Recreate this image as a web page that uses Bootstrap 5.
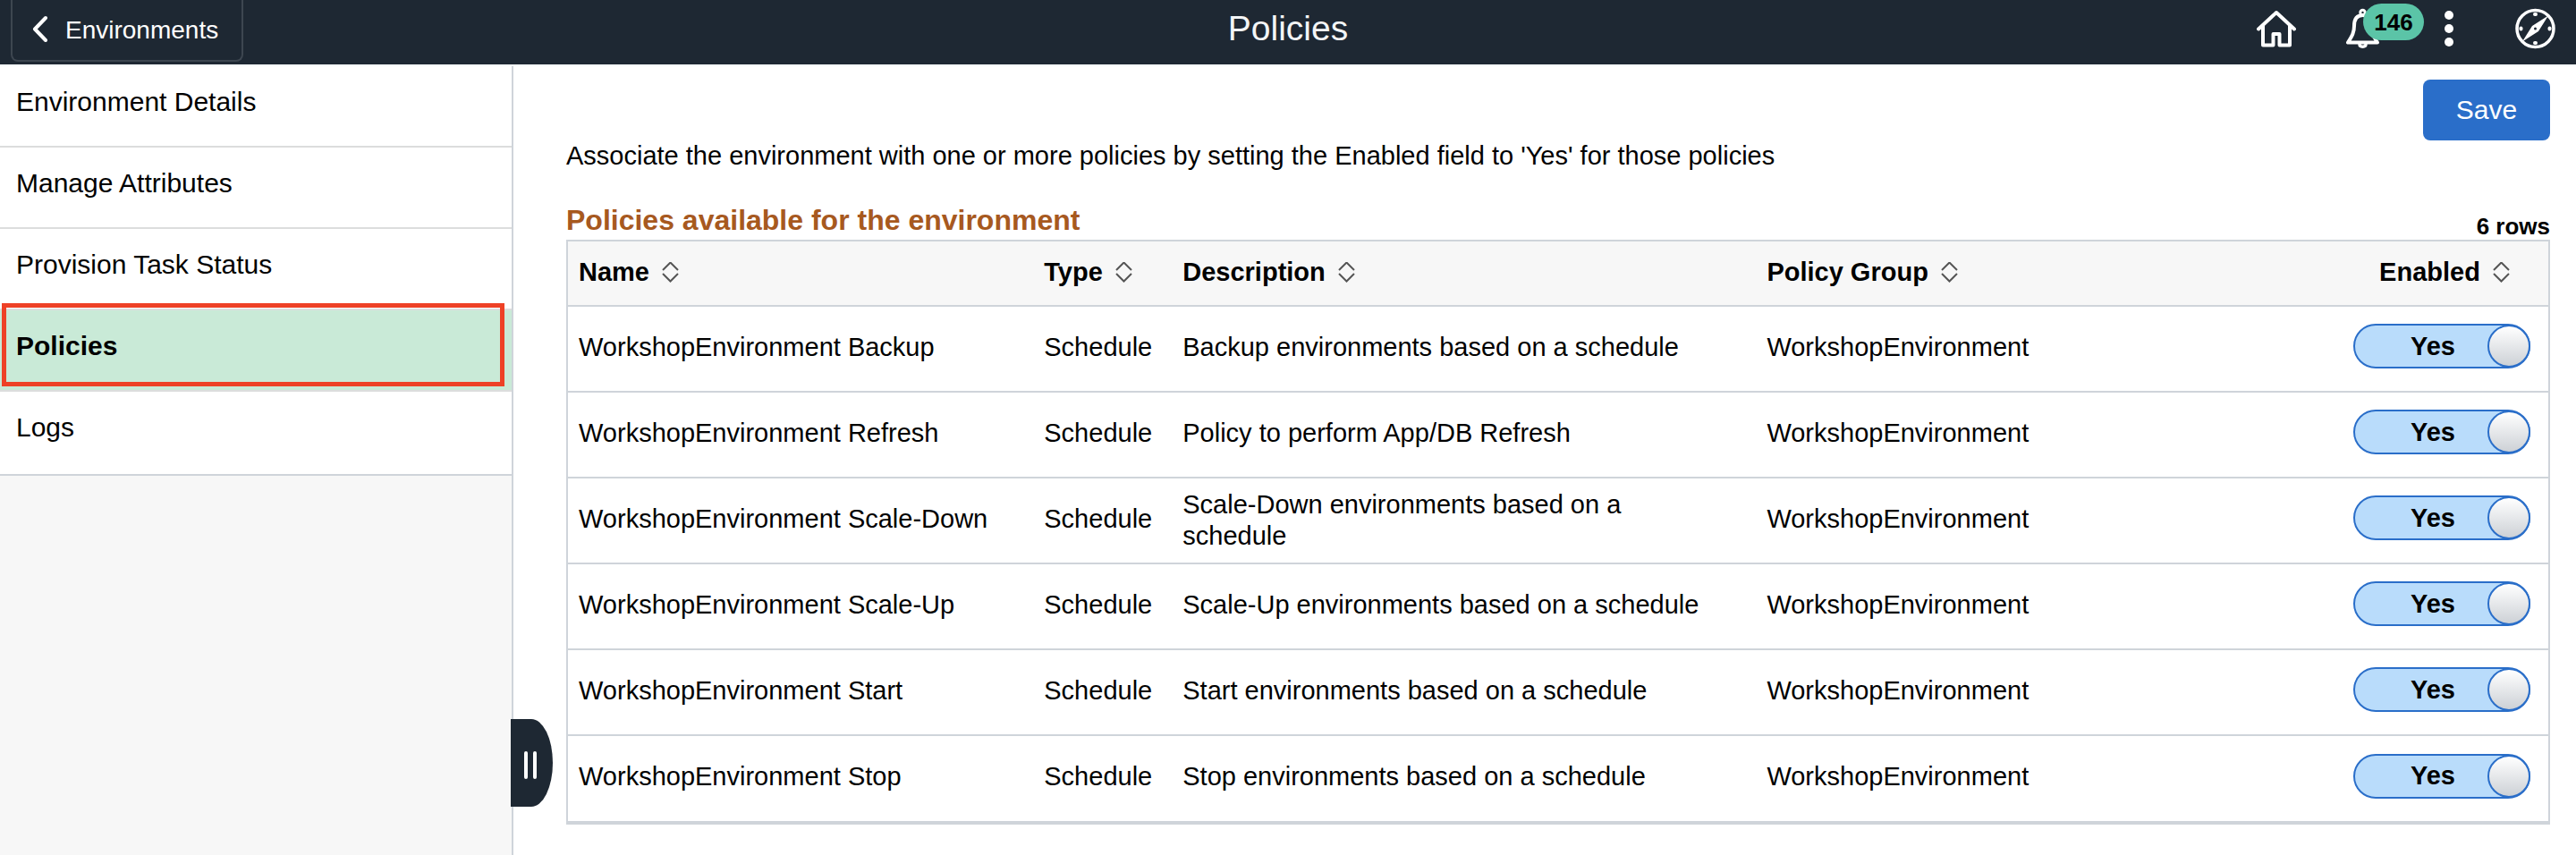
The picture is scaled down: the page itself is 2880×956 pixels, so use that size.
<!DOCTYPE html>
<html lang="en">
<head>
<meta charset="utf-8">
<meta name="viewport" content="width=device-width, initial-scale=1">
<title>Policies</title>
<link href="https://cdn.jsdelivr.net/npm/bootstrap@5.3.0/dist/css/bootstrap.min.css" rel="stylesheet">
<style>
  :root { --ink: #1e2833; --line: #cfd4da; --brand: #2a6ec9; }
  body { font-family: "Liberation Sans", Arial, sans-serif; font-size: 29px; line-height: 35px; color: #000; background: #fff; }

  /* Top bar */
  .topbar { display: grid; grid-template-columns: 1fr auto 1fr; height: 74px; background: var(--ink); border-bottom: 2px solid #f2f5f6; padding: 0 12px; }
  .back-btn { height: 69px; padding: 0 26px 0 22px; gap: 20px; font-size: 28px; line-height: 32px; color: #fff; border: 2px solid #3d4650; border-top: 0; border-radius: 0 0 8px 8px; text-decoration: none; }
  .page-title { font-size: 39px; line-height: 46px; font-weight: 400; color: #f3f5f6; padding-top: 9px; }
  .tool { display: block; padding: 0; border: 0; background: none; color: #fff; line-height: 0; height: 64px; }
  .tool svg { display: block; }
  .tool-home { margin-right: 56px; }
  .tool-bell { margin-right: 73px; }
  .tool-more { margin-right: 69px; }
  .tool-nav { margin-right: 11px; }
  .count { left: 19px; top: 4px; width: 68px; height: 41px; border-radius: 21px; background: #5bc4a7; color: #000; font-size: 26px; line-height: 43px; font-weight: 700; }

  /* Side navigation */
  .sidebar { width: 574px; background: #f7f7f7; border-right: 2px solid var(--line); font-size: 30px; }
  .side-list { background: #fff; border-bottom: 2px solid var(--line); padding-bottom: 3px; }
  .side-list li + li { border-top: 2px solid #dcdddd; }
  .side-link { display: block; padding: 22px 18px 32px; color: #000; text-decoration: none; }
  .side-link.active { background: #c9ead7; font-weight: 700; }
  .callout { top: -8px; right: 8px; bottom: 4px; left: 2px; border: 5px solid #ee4126; pointer-events: none; }
  .side-handle { left: 571px; bottom: 54px; width: 47px; height: 98px; border: 0; border-radius: 0 24px 24px 0 / 0 49px 49px 0; background: var(--ink); gap: 6px; padding: 4px 4px 0 0; }
  .side-handle i { width: 4px; height: 31px; border-radius: 2px; background: #fff; }

  /* Content */
  .content { padding: 15px 29px 20px 59px; }
  .save-btn { width: 142px; height: 68px; padding-bottom: 3px; font-size: 30px; line-height: 35px; color: #fff; background: var(--brand); border: 0; border-radius: 8px; }
  .grid-head { padding-top: 12px; }
  .grid-title { font-size: 32px; line-height: 36px; font-weight: 700; color: #a7591f; }
  .row-count { font-size: 26px; line-height: 30px; font-weight: 700; }
  .policy-grid { table-layout: fixed; border: 2px solid var(--line); border-bottom-width: 4px; border-collapse: separate; border-spacing: 0; }
  .policy-grid th { height: 73px; padding: 0 12px 2px; background: #f7f7f7; border-bottom: 2px solid var(--line); white-space: nowrap; }
  .policy-grid th:last-child { padding-right: 6px; }
  .policy-grid td { height: 96px; padding: 0 60px 4px 12px; border-bottom: 2px solid var(--line); vertical-align: middle; }
  .policy-grid td:first-child { padding-right: 12px; }
  .policy-grid tr:last-child td { height: 95px; border-bottom: 0; }
  .policy-grid .switch-cell { padding: 0 20px 6px; text-align: right; }
  .col-name { width: 23.5%; }
  .col-type { width: 7%; }
  .col-desc { width: 29.5%; }
  .col-switch { width: 238px; }
  .sort-btn { display: inline-flex; align-items: center; gap: 14px; padding: 0; border: 0; background: none; font-weight: 700; color: #000; }
  .switch { display: inline-flex; align-items: center; width: 198px; height: 50px; border: 2px solid var(--brand); border-radius: 25px; background: #b9dcfb; font-weight: 700; vertical-align: middle; cursor: pointer; }
  .switch span { flex: 1; text-align: center; padding-left: 24px; }
  .switch input { appearance: none; width: 48px; height: 48px; margin: -1px -2px; border: 2px solid var(--brand); border-radius: 50%; background: linear-gradient(#fff, #cdd1d6); }
</style>
</head>
<body class="min-vh-100 d-flex flex-column">

<header class="topbar">
  <div class="d-flex align-items-start">
    <a class="back-btn d-flex align-items-center" href="#">
      <svg width="17" height="35" viewBox="0 0 17 35" fill="none" stroke="#fff" stroke-width="4" stroke-linecap="round" stroke-linejoin="round" aria-hidden="true"><path d="M15 4 3 16.500 15 29"/></svg>
      <span>Environments</span>
    </a>
  </div>
  <h1 class="page-title m-0">Policies</h1>
  <div class="d-flex justify-content-end">
    <button class="tool tool-home" type="button" aria-label="Home">
      <svg width="44" height="64" viewBox="0 0 44 64" fill="none" stroke="#fff" stroke-width="4" stroke-linejoin="round" stroke-linecap="round"><path d="M2 32.500 22 14 42 32.500M7 29V50.500H18.500V38H25.500V50.500H37V29"/></svg>
    </button>
    <button class="tool tool-bell position-relative" type="button" aria-label="Notifications">
      <svg width="37" height="64" viewBox="0 0 37 64" fill="none" stroke="#fff" stroke-width="4" stroke-linejoin="round" stroke-linecap="round"><path d="M2 47.500H35C30 40 28.500 36 28.500 29C28.500 21 25 17 18.500 17S9 21 9 29C9 36 7 40 2 47.500Z"/><circle cx="18.500" cy="14" r="2.700" stroke-width="3"/><path d="M15 49.500C15 53 22 53 22 49.500" stroke-width="3.500"/></svg>
      <span class="count position-absolute">146</span>
    </button>
    <button class="tool tool-more" type="button" aria-label="Actions">
      <svg width="10" height="64" viewBox="0 0 10 64" fill="#fff"><circle cx="5" cy="17" r="5"/><circle cx="5" cy="32" r="5"/><circle cx="5" cy="47" r="5"/></svg>
    </button>
    <button class="tool tool-nav" type="button" aria-label="Navigator">
      <svg width="45" height="64" viewBox="0 0 45 64" fill="none" stroke="#fff"><circle cx="22.500" cy="32" r="20.500" stroke-width="3.500"/><path fill="#fff" stroke="none" fill-rule="evenodd" d="M37 17.500 26 35 8 46.500 19 29ZM22.500 30.500A1.500 1.500 0 1 0 22.500 33.500A1.500 1.500 0 1 0 22.500 30.500Z"/><path stroke-width="4" stroke-linecap="round" d="M22 16H23M22 48H23M6.500 31.500V32.500M38.500 31.500V32.500"/></svg>
    </button>
  </div>
</header>

<div class="d-flex flex-grow-1 position-relative">
  <nav class="sidebar flex-shrink-0" aria-label="Environment">
    <ul class="side-list list-unstyled m-0">
      <li><a class="side-link" href="#">Environment Details</a></li>
      <li><a class="side-link" href="#">Manage Attributes</a></li>
      <li><a class="side-link" href="#">Provision Task Status</a></li>
      <li class="position-relative"><a class="side-link active" href="#" aria-current="page">Policies</a><div class="callout position-absolute"></div></li>
      <li><a class="side-link" href="#">Logs</a></li>
    </ul>
  </nav>
  <button class="side-handle position-absolute d-flex align-items-center justify-content-center" type="button" aria-label="Collapse navigation"><i></i><i></i></button>

  <main class="content flex-grow-1">
    <div class="d-flex justify-content-end"><button class="save-btn" type="button">Save</button></div>
    <p class="mb-4">Associate the environment with one or more policies by setting the Enabled field to 'Yes' for those policies</p>
    <div class="grid-head d-flex justify-content-between align-items-end">
      <h2 class="grid-title m-0 pb-1" id="grid-title">Policies available for the environment</h2>
      <div class="row-count">6 rows</div>
    </div>
    <table class="policy-grid w-100" aria-labelledby="grid-title">
      <colgroup><col class="col-name"><col class="col-type"><col class="col-desc"><col><col class="col-switch"></colgroup>
      <thead>
        <tr>
          <th scope="col"><button class="sort-btn" type="button">Name <svg width="19" height="24" viewBox="0 0 19 24" fill="none" stroke="#555" stroke-width="2"><path d="M1 9 9.500 .5 18 9M1 13 9.500 21.500 18 13"/></svg></button></th>
          <th scope="col"><button class="sort-btn" type="button">Type <svg width="19" height="24" viewBox="0 0 19 24" fill="none" stroke="#555" stroke-width="2"><path d="M1 9 9.500 .5 18 9M1 13 9.500 21.500 18 13"/></svg></button></th>
          <th scope="col"><button class="sort-btn" type="button">Description <svg width="19" height="24" viewBox="0 0 19 24" fill="none" stroke="#555" stroke-width="2"><path d="M1 9 9.500 .5 18 9M1 13 9.500 21.500 18 13"/></svg></button></th>
          <th scope="col"><button class="sort-btn" type="button">Policy Group <svg width="19" height="24" viewBox="0 0 19 24" fill="none" stroke="#555" stroke-width="2"><path d="M1 9 9.500 .5 18 9M1 13 9.500 21.500 18 13"/></svg></button></th>
          <th scope="col" class="text-center"><button class="sort-btn" type="button">Enabled <svg width="19" height="24" viewBox="0 0 19 24" fill="none" stroke="#555" stroke-width="2"><path d="M1 9 9.500 .5 18 9M1 13 9.500 21.500 18 13"/></svg></button></th>
        </tr>
      </thead>
      <tbody>
        <tr><td>WorkshopEnvironment Backup</td><td class="pe-0">Schedule</td><td>Backup environments based on a schedule</td><td>WorkshopEnvironment</td><td class="switch-cell"><label class="switch"><span>Yes</span><input type="checkbox" role="switch" checked></label></td></tr>
        <tr><td>WorkshopEnvironment Refresh</td><td class="pe-0">Schedule</td><td>Policy to perform App/DB Refresh</td><td>WorkshopEnvironment</td><td class="switch-cell"><label class="switch"><span>Yes</span><input type="checkbox" role="switch" checked></label></td></tr>
        <tr><td>WorkshopEnvironment Scale-Down</td><td class="pe-0">Schedule</td><td class="pt-1">Scale-Down environments based on a schedule</td><td>WorkshopEnvironment</td><td class="switch-cell"><label class="switch"><span>Yes</span><input type="checkbox" role="switch" checked></label></td></tr>
        <tr><td>WorkshopEnvironment Scale-Up</td><td class="pe-0">Schedule</td><td>Scale-Up environments based on a schedule</td><td>WorkshopEnvironment</td><td class="switch-cell"><label class="switch"><span>Yes</span><input type="checkbox" role="switch" checked></label></td></tr>
        <tr><td>WorkshopEnvironment Start</td><td class="pe-0">Schedule</td><td>Start environments based on a schedule</td><td>WorkshopEnvironment</td><td class="switch-cell"><label class="switch"><span>Yes</span><input type="checkbox" role="switch" checked></label></td></tr>
        <tr><td>WorkshopEnvironment Stop</td><td class="pe-0">Schedule</td><td>Stop environments based on a schedule</td><td>WorkshopEnvironment</td><td class="switch-cell"><label class="switch"><span>Yes</span><input type="checkbox" role="switch" checked></label></td></tr>
      </tbody>
    </table>
  </main>
</div>

<script src="https://cdn.jsdelivr.net/npm/bootstrap@5.3.0/dist/js/bootstrap.bundle.min.js"></script>
</body>
</html>
